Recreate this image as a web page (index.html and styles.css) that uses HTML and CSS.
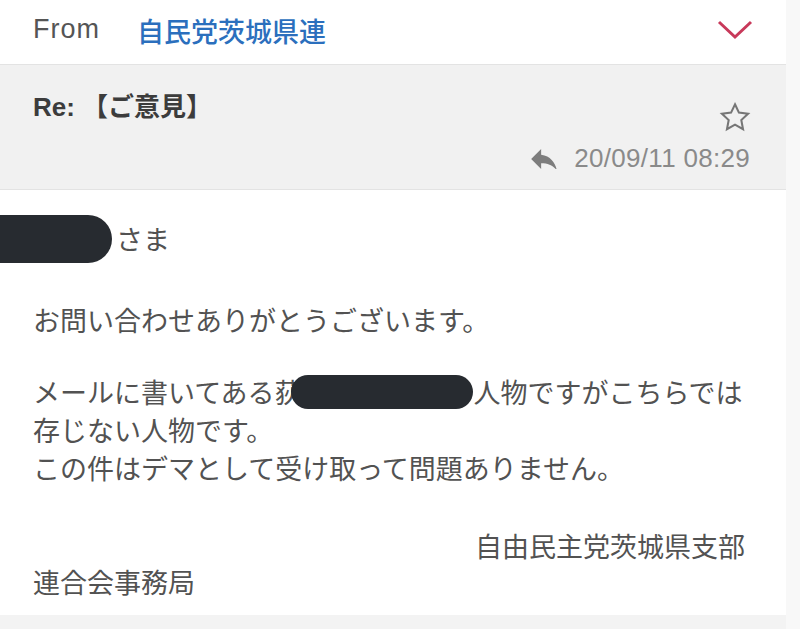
FILE: index.html
```html
<!DOCTYPE html>
<html lang="ja">
<head>
<meta charset="utf-8">
<link rel="stylesheet" href="styles.css">
</head>
<body>
<div class="page">
  <div class="main">
    <div class="from-row">
      <span class="from-label">From</span>
      <span class="from-name">自民党茨城県連</span>
      <svg class="chevron" width="36" height="20" viewBox="0 0 36 20"><polyline points="2,2 18,17 34,2" fill="none" stroke="#c8395a" stroke-width="3"/></svg>
    </div>
    <div class="header">
      <div class="subject">Re: 【ご意見】</div>
      <div class="meta">
        <svg class="star" width="34" height="33" viewBox="0 0 24 24"><path d="M12 2.4l2.85 6.05 6.65.85-4.9 4.6 1.25 6.6L12 17.25 6.15 20.5l1.25-6.6-4.9-4.6 6.65-.85z" fill="none" stroke="#767676" stroke-width="1.5" stroke-linejoin="miter"/></svg>
        <div class="date-row">
          <svg class="reply" width="26" height="20" viewBox="3 5 18 14"><path d="M10 9V5l-7 7 7 7v-4.1c5 0 8.5 1.6 11 5.1-1-5-4-10-11-11z" fill="#7d7d7d"/></svg>
          <span class="date">20/09/11 08:29</span>
        </div>
      </div>
    </div>
    <div class="body">
      <div class="greet">
        <span class="redact redact-name"></span>
        <span class="sama">さま</span>
      </div>
      <div class="para thanks">お問い合わせありがとうございます。</div>
      <div class="para msg">
        <div class="line">メールに書いてある荻<span class="redact redact-inline"></span>人物ですがこちらでは</div>
        <div class="line">存じない人物です。</div>
        <div class="line">この件はデマとして受け取って問題ありません。</div>
      </div>
      <div class="para sign">
        <div class="sign-right">自由民主党茨城県支部</div>
        <div class="sign-left">連合会事務局</div>
      </div>
    </div>
    <div class="bottom-band"></div>
  </div>
  <div class="strip"></div>
</div>
</body>
</html>
```
FILE: styles.css
```css
html, body {
  margin: 0;
  padding: 0;
  background: #ffffff;
}
body {
  font-family: "Noto Sans CJK JP", "Noto Sans", sans-serif;
  color: #525252;
}
.page {
  display: grid;
  grid-template-columns: 786px 14px;
  width: 800px;
  height: 629px;
  overflow: hidden;
}
.main {
  display: flex;
  flex-direction: column;
  height: 629px;
}
.strip {
  background: #f8f8f8;
}
.from-row {
  height: 64px;
  box-sizing: border-box;
  display: flex;
  align-items: center;
  padding: 0 33px 6px 33px;
  background: #ffffff;
}
.from-label {
  font-family: "Liberation Sans", sans-serif;
  font-size: 27px;
  letter-spacing: 1px;
  color: #555555;
  width: 104px;
}
.from-name {
  font-size: 27px;
  font-weight: 500;
  color: #2b6fbd;
  line-height: 34px;
  padding-top: 3px;
}
.chevron {
  margin-left: auto;
  margin-top: 1px;
}
.header {
  height: 124px;
  background: #f1f1f1;
  border-top: 1px solid #e3e3e3;
  border-bottom: 1px solid #e3e3e3;
  display: flex;
  padding-right: 34px;
  padding-left: 33px;
}
.subject {
  flex: 1;
  padding-top: 25px;
  font-family: "Liberation Sans", "Noto Sans CJK JP", sans-serif;
  font-weight: 700;
  font-size: 26px;
  line-height: 34px;
  color: #3c3c3c;
}
.meta {
  display: flex;
  flex-direction: column;
  align-items: flex-end;
  padding-top: 36px;
}
.star {
  display: block;
}
.date-row {
  display: flex;
  align-items: center;
  margin-top: 9px;
  height: 30px;
}
.reply {
  margin-right: 17px;
  margin-top: 1px;
}
.date {
  font-family: "Liberation Sans", sans-serif;
  font-size: 26px;
  letter-spacing: 0.3px;
  color: #8a8a8a;
  line-height: 30px;
  margin-right: 2px;
}
.body {
  flex: 1;
  padding-top: 25px;
  font-size: 27px;
}
.greet {
  display: flex;
  align-items: center;
  height: 48px;
}
.redact {
  background: #272b30;
  display: inline-block;
}
.redact-name {
  width: 112px;
  height: 48px;
  border-radius: 0 24px 24px 0;
}
.sama {
  margin-left: 4px;
  line-height: 36px;
}
.para {
  padding-left: 33px;
  padding-right: 41px;
}
.thanks {
  margin-top: 38px;
  line-height: 37px;
}
.msg {
  margin-top: 35px;
  line-height: 38px;
}
.line {
  display: flex;
  align-items: center;
  height: 38px;
  white-space: nowrap;
}
.redact-inline {
  width: 182px;
  height: 34px;
  border-radius: 17px;
  margin-left: -10px;
}
.sign {
  margin-top: 41px;
  line-height: 36px;
}
.sign-right {
  text-align: right;
}
.bottom-band {
  height: 14px;
  background: #f3f3f3;
}
```
